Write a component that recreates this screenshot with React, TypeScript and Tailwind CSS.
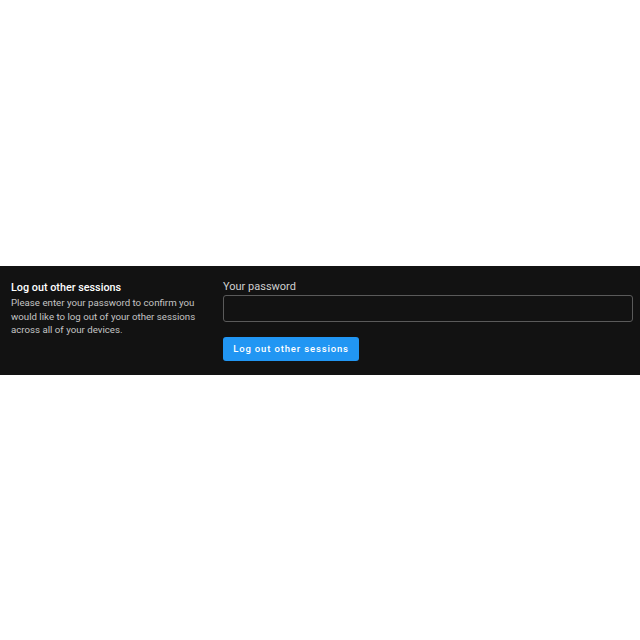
import React from 'react';

export default function App() {
  return (
    <div className="min-h-[640px] w-[640px] bg-white flex flex-col justify-center font-['Roboto',sans-serif]">
      <div className="mt-[1px] bg-[#121212] h-[109px] flex pl-[11px] pr-[7px] pt-[15px]">
        <div className="w-[212px] shrink-0">
          <h3 className="text-[10.8px] leading-[14px] font-medium text-white">Log out other sessions</h3>
          <p className="mt-[1px] text-[9.7px] leading-[13.5px] text-[#c4c4c4] pr-[10px]">
            Please enter your password to confirm you would like to log out of your other sessions across all of your devices.
          </p>
        </div>
        <div className="flex-1 -mt-[1px]">
          <label className="block text-[11px] leading-[14px] text-[#cfcfcf]">Your password</label>
          <input
            type="password"
            className="mt-[1px] block w-full h-[27px] bg-transparent border border-[#5a5a5a] rounded-[3px] text-white text-[11px] px-2 outline-none"
          />
          <button className="mt-[15px] h-[24px] w-[136px] bg-[#2196f3] rounded-[3px] text-white text-[9.5px] font-medium tracking-[0.09em]">
            Log out other sessions
          </button>
        </div>
      </div>
    </div>
  );
}
